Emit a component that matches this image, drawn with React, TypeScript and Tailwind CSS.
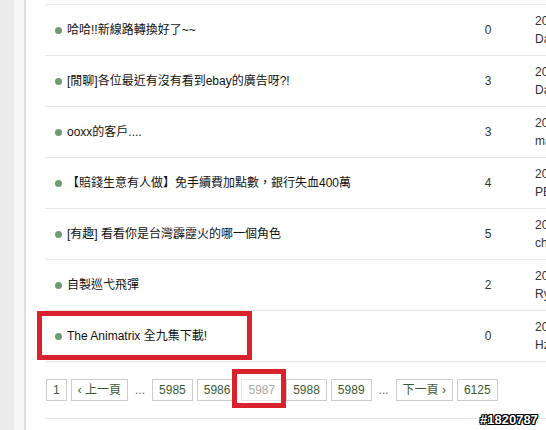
import React from "react";

const rows = [
  { t: "哈哈!!新線路轉換好了~~", n: "0", d1: "2010-03-28", d2: "Dante" },
  { t: "[閒聊]各位最近有沒有看到ebay的廣告呀?!", n: "3", d1: "2010-03-28", d2: "Dante" },
  { t: "ooxx的客戶....", n: "3", d1: "2010-03-27", d2: "maple" },
  { t: "【賠錢生意有人做】免手續費加點數，銀行失血400萬", n: "4", d1: "2010-03-27", d2: "PETER" },
  { t: "[有趣] 看看你是台灣霹靂火的哪一個角色", n: "5", d1: "2010-03-27", d2: "chris" },
  { t: "自製巡弋飛彈", n: "2", d1: "2010-03-27", d2: "Ryan" },
  { t: "The Animatrix 全九集下載!", n: "0", d1: "2010-03-27", d2: "Hz" },
];

const font = { fontFamily: '"Liberation Sans", "Noto Sans CJK TC", Arial, sans-serif' };

function PageBtn({ children, current }: { children: React.ReactNode; current?: boolean }) {
  return (
    <span
      className={
        "flex h-[22px] items-center px-[6px] text-[12px] leading-none border " +
        (current ? "border-[#e4e4e4] text-[#a8a8a8]" : "border-[#cccccc] text-[#3d5a36]")
      }
    >
      {children}
    </span>
  );
}

export default function App() {
  return (
    <div className="relative flex h-[430px] w-[546px] overflow-hidden bg-white" style={font}>
      <div className="w-[14px] shrink-0 bg-[#ececec]" />
      <div className="w-[10px] shrink-0 bg-[#f7f7f7]" />
      <div className="w-[2px] shrink-0 bg-[#dedede]" />
      <div className="min-w-0 flex-1 pl-[19px]">
        <div className="w-[620px] pt-[4px]">
          {rows.map((r, i) => (
            <div
              key={i}
              className="grid h-[51px] grid-cols-[425px_36px_1fr] items-center border-t border-[#e6e6e6]"
            >
              <div className="flex items-center pl-[10px] text-[12px] text-[#111]">
                <span className="mr-[5px] h-[7px] w-[7px] rounded-full bg-[#6f9b70]" />
                <span>{r.t}</span>
              </div>
              <div className="text-center text-[12px] text-[#333]">{r.n}</div>
              <div className="pl-[29px] text-[12px] leading-[18px] text-[#333]">
                <div>{r.d1}</div>
                <div>{r.d2}</div>
              </div>
            </div>
          ))}
          <div className="border-t border-[#e6e6e6] pt-[17px] pb-[17px] border-b">
            <div className="flex items-center gap-[4px] pl-[1px]">
              <PageBtn>1</PageBtn>
              <PageBtn>‹ 上一頁</PageBtn>
              <span className="px-[3px] text-[12px] text-[#666]">...</span>
              <PageBtn>5985</PageBtn>
              <PageBtn>5986</PageBtn>
              <PageBtn current>5987</PageBtn>
              <PageBtn>5988</PageBtn>
              <PageBtn>5989</PageBtn>
              <span className="px-[3px] text-[12px] text-[#666]">...</span>
              <PageBtn>下一頁 ›</PageBtn>
              <PageBtn>6125</PageBtn>
            </div>
          </div>
        </div>
      </div>

      <div className="absolute left-[37px] top-[311px] h-[49px] w-[215px] border-[5px] border-[#d9232c]" />
      <div className="absolute left-[232px] top-[369px] h-[39px] w-[54px] border-[5px] border-[#d9232c]" />

      <div
        className="absolute left-[480px] top-[413px] text-[13px] font-bold leading-none text-white"
        style={{
          fontFamily: '"Liberation Sans", Arial, sans-serif',
          textShadow:
            "1px 0 0 #000, -1px 0 0 #000, 0 1px 0 #000, 0 -1px 0 #000, 1px 1px 0 #000, -1px -1px 0 #000, 1px -1px 0 #000, -1px 1px 0 #000",
        }}
      >
        #1820787
      </div>
    </div>
  );
}
